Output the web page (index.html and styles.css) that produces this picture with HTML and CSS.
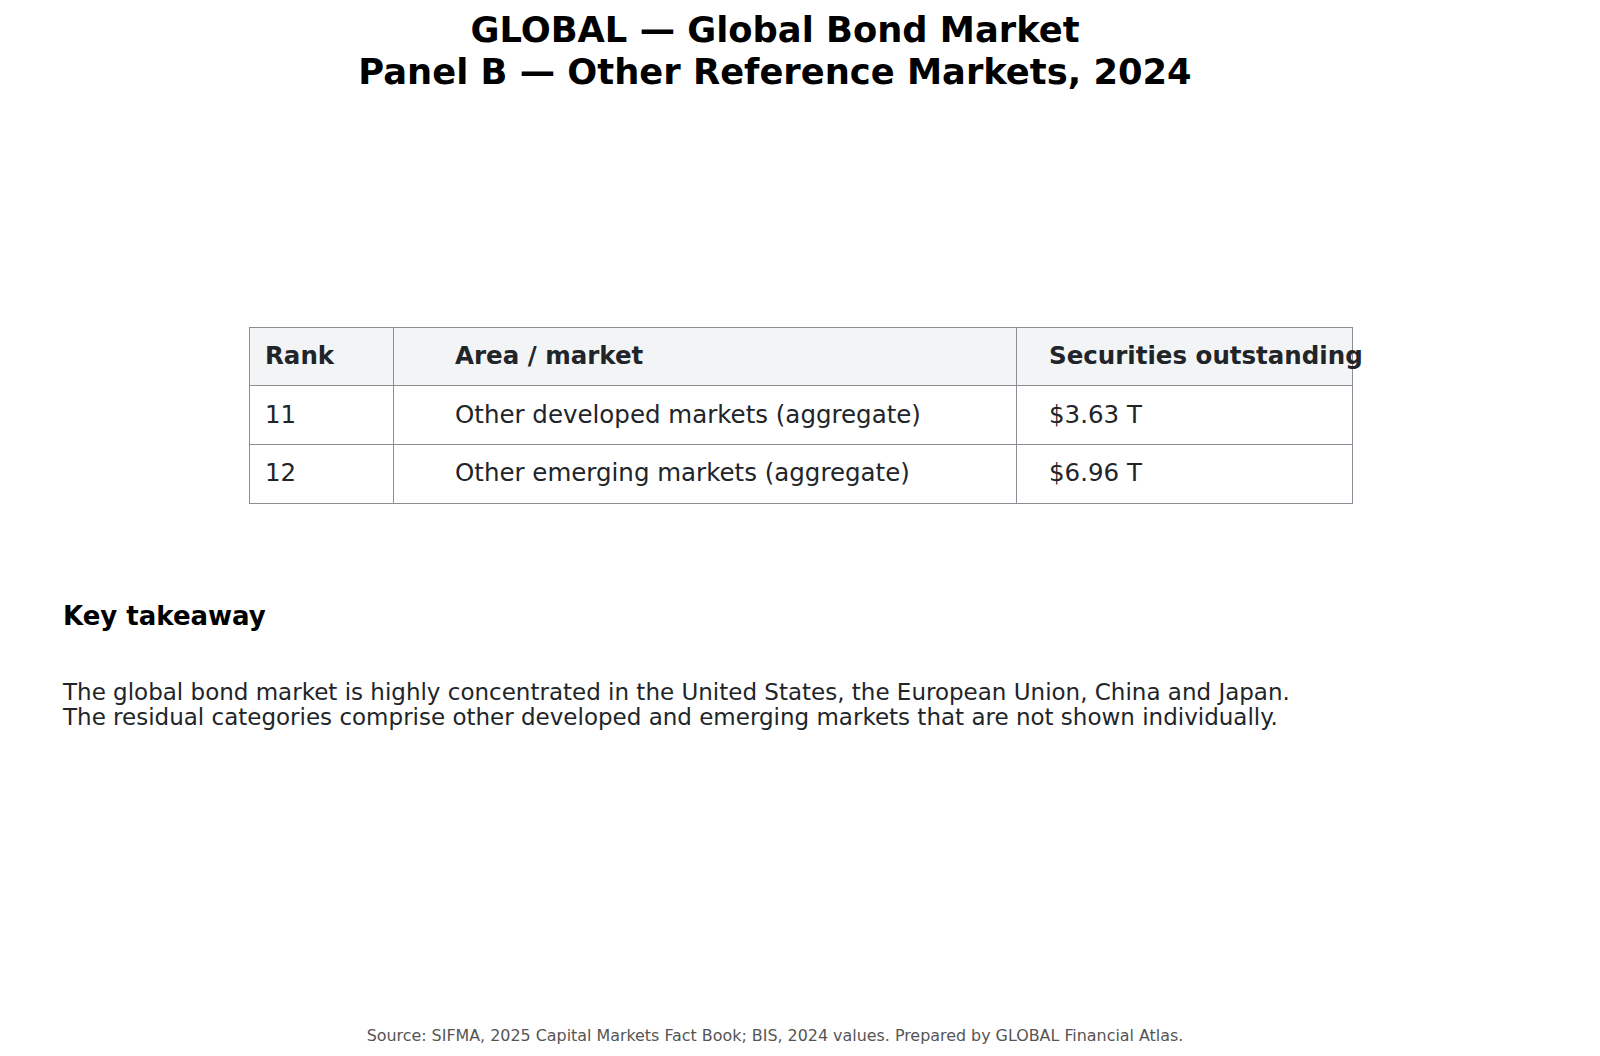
FILE: index.html
```html
<!DOCTYPE html>
<html lang="en">
<head>
<meta charset="utf-8">
<title>GLOBAL — Global Bond Market</title>
<link rel="stylesheet" href="styles.css">
</head>
<body>
<div class="page">
  <header class="title">
    <h1>GLOBAL — Global Bond Market<br>Panel B — Other Reference Markets, 2024</h1>
  </header>
  <section class="table-wrap">
    <table class="markets">
      <thead>
        <tr>
          <th class="c-rank">Rank</th>
          <th class="c-area">Area / market</th>
          <th class="c-val">Securities outstanding</th>
        </tr>
      </thead>
      <tbody>
        <tr>
          <td class="c-rank">11</td>
          <td class="c-area">Other developed markets (aggregate)</td>
          <td class="c-val">$3.63 T</td>
        </tr>
        <tr>
          <td class="c-rank">12</td>
          <td class="c-area">Other emerging markets (aggregate)</td>
          <td class="c-val">$6.96 T</td>
        </tr>
      </tbody>
    </table>
  </section>
  <section class="takeaway">
    <h2>Key takeaway</h2>
    <p>The global bond market is highly concentrated in the United States, the European Union, China and Japan.<br>The residual categories comprise other developed and emerging markets that are not shown individually.</p>
  </section>
  <footer class="source">Source: SIFMA, 2025 Capital Markets Fact Book; BIS, 2024 values. Prepared by GLOBAL Financial Atlas.</footer>
</div>
</body>
</html>
```
FILE: styles.css
```css
html, body {
  margin: 0;
  padding: 0;
  background: #ffffff;
}
body {
  font-family: "DejaVu Sans", "Noto Sans", sans-serif;
}
.page {
  width: 1600px;
  height: 1056px;
  box-sizing: border-box;
  display: flex;
  flex-direction: column;
  padding: 9px 0 10px 0;
}
.title h1 {
  margin: 0;
  width: 1550px;
  text-align: center;
  font-size: 35.3px;
  line-height: 42.4px;
  font-weight: bold;
  color: #000000;
}
.table-wrap {
  margin-top: 233px;
  padding-left: 249px;
}
.markets {
  border-collapse: collapse;
  table-layout: fixed;
  width: 1103px;
  color: #212529;
  font-size: 24.5px;
}
.markets th, .markets td {
  border: 1px solid #8c9096;
  height: 58.67px;
  box-sizing: border-box;
  padding: 0 0 2px 0;
  text-align: left;
  vertical-align: middle;
  white-space: nowrap;
  overflow: visible;
}
.markets th {
  background: #f3f4f6;
  font-weight: bold;
}
.c-rank { width: 144px; padding-left: 15px !important; }
.c-area { width: 623px; padding-left: 61px !important; }
.c-val { width: 336px; padding-left: 32px !important; }
.takeaway {
  padding-left: 63px;
  margin-top: 97px;
}
.takeaway h2 {
  margin: 0;
  font-size: 26px;
  line-height: 31px;
  font-weight: bold;
  color: #000000;
}
.takeaway p {
  margin: 48px 0 0 0;
  font-size: 23px;
  line-height: 25.5px;
  color: #212529;
}
.source {
  margin-top: auto;
  width: 1550px;
  text-align: center;
  font-size: 15.9px;
  line-height: 20px;
  color: #555555;
}
```
